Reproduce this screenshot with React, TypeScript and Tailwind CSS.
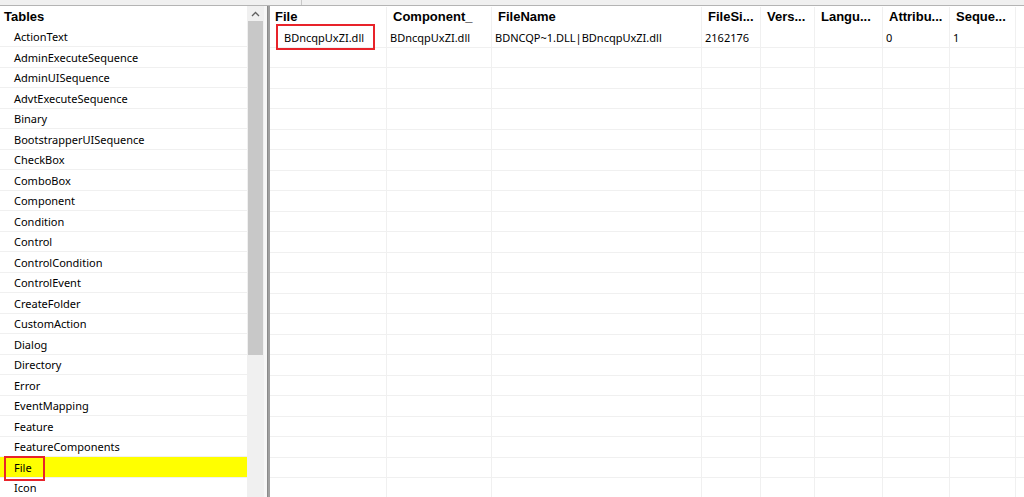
import React from 'react';

const tables = [
  'ActionText',
  'AdminExecuteSequence',
  'AdminUISequence',
  'AdvtExecuteSequence',
  'Binary',
  'BootstrapperUISequence',
  'CheckBox',
  'ComboBox',
  'Component',
  'Condition',
  'Control',
  'ControlCondition',
  'ControlEvent',
  'CreateFolder',
  'CustomAction',
  'Dialog',
  'Directory',
  'Error',
  'EventMapping',
  'Feature',
  'FeatureComponents',
  'File',
  'Icon',
];

const columns = [
  { name: 'File', w: 'w-[117px]' },
  { name: 'Component_', w: 'w-[105px]' },
  { name: 'FileName', w: 'w-[210px]' },
  { name: 'FileSi...', w: 'w-[59px]' },
  { name: 'Vers...', w: 'w-[54px]' },
  { name: 'Langu...', w: 'w-[68px]' },
  { name: 'Attribu...', w: 'w-[67px]' },
  { name: 'Seque...', w: 'w-[66px]' },
];

const firstRow = ['BDncqpUxZI.dll', 'BDncqpUxZI.dll', 'BDNCQP~1.DLL|BDncqpUxZI.dll', '2162176', '', '', '0', '1'];

const App = () => {
  return (
    <div className="w-[1024px] h-[497px] overflow-hidden bg-white flex flex-col font-['Noto_Sans',sans-serif] text-[11px] text-black">
      {/* top strip */}
      <div className="h-[6px] flex bg-[#f0f0f0] border-b border-[#b4b4b4]">
        <div className="w-[302px] border-r border-[#c8c8c8]" />
        <div className="flex-1" />
      </div>

      <div className="flex flex-1 min-h-0">
        {/* Tables list */}
        <div className="w-[247px] flex flex-col">
          <div className="h-[21px] pl-[4px] pt-[1px] flex items-center font-['Liberation_Sans',sans-serif] font-bold text-[13px]">Tables</div>
          {tables.map((t) => (
            <div
              key={t}
              className={`h-[20.5px] shrink-0 border-b border-[#f0f0f0] flex items-center pl-[14px] pt-[2px] ${t === 'File' ? 'bg-[#ffff00] relative' : ''}`}
            >
              {t === 'File' && (
                <div className="absolute left-[4px] top-[-1px] w-[41px] h-[25px] border-2 border-[#e8232a]" />
              )}
              <span className="relative">{t}</span>
            </div>
          ))}
        </div>

        {/* scrollbar */}
        <div className="w-[17px] bg-[#f0f0f0] flex flex-col">
          <div className="h-[15px] flex items-center justify-center">
            <svg width="9" height="6" viewBox="0 0 9 6">
              <path d="M1 5 L4.5 1.5 L8 5" fill="none" stroke="#606060" strokeWidth="1.3" />
            </svg>
          </div>
          <div className="mx-[1px] h-[334px] bg-[#c8c8c8]" />
        </div>

        {/* splitter */}
        <div className="w-[3px] bg-[#f7f7f7]" />
        <div className="w-[3px] bg-[#a0a0a0] border-l border-[#8a8a8a]" />

        {/* grid */}
        <div className="flex-1 flex flex-col">
          <div className="h-[21px] shrink-0 flex pt-[1px] font-['Liberation_Sans',sans-serif] font-bold text-[13px]">
            {columns.map((c, i) => (
              <div key={c.name} className={`${c.w} shrink-0 border-r border-[#f0f0f0] flex items-center ${i === 0 ? 'pl-[5px]' : 'pl-[6px]'}`}>
                {c.name}
              </div>
            ))}
            <div className="flex-1" />
          </div>
          {Array.from({ length: 23 }).map((_, r) => (
            <div key={r} className="h-[20.5px] shrink-0 flex border-b border-[#f0f0f0]">
              {columns.map((c, i) => (
                <div key={c.name} className={`${c.w} shrink-0 border-r border-[#f0f0f0] flex items-center pt-[2px] ${i === 0 ? 'pl-[14px] relative' : 'pl-[3px]'}`}>
                  {r === 0 && i === 0 && (
                    <div className="absolute left-[6px] top-[-3px] w-[99px] h-[26px] border-2 border-[#e8232a]" />
                  )}
                  <span className="relative">{r === 0 ? firstRow[i] : ''}</span>
                </div>
              ))}
              <div className="flex-1" />
            </div>
          ))}
        </div>
      </div>
    </div>
  );
};

export default App;
